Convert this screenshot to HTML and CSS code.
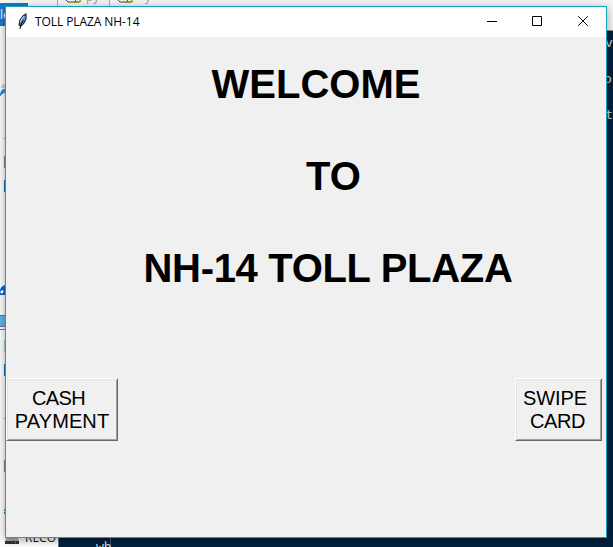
FILE: index.html
```html
<!DOCTYPE html>
<html lang="en">
<head>
<meta charset="utf-8">
<title>TOLL PLAZA NH-14</title>
<link rel="stylesheet" href="styles.css">
</head>
<body>
<main class="desktop">
  <svg class="backdrop" width="613" height="547" viewBox="0 0 613 547" aria-hidden="true">
    <rect width="613" height="547" fill="#f5f5f5"/>
    <rect y="27" width="58" height="520" fill="#fff"/>
    <rect y="3" width="28" height="23" fill="#1979ca"/>
    <text class="ui" x="0" y="19" fill="#fff">le</text>
    <rect x="57" width="1" height="7" fill="#aaa"/>
    <rect x="109" width="1" height="7" fill="#aaa"/>
    <path d="M66 0l2 2h6l2-2M118 0l2 2h6l2-2" fill="none" stroke="#444"/>
    <path d="M73 1h5l3-1v2l-3 1h-5zM125 1h5l3-1v2l-3 1h-5z" fill="#9a9a20"/>
    <text class="ui" x="86" y="1" fill="#999">py</text>
    <text class="ui" x="145" y="1" fill="#999">y</text>
    <rect x="604" y="30" width="9" height="1" fill="#8b9299"/>
    <rect x="604" y="31" width="9" height="516" fill="#012140"/>
    <rect x="58" y="536" width="555" height="11" fill="#012140"/>
    <rect x="58" y="536" width="1" height="11" fill="#66788a"/>
    <rect x="110" y="536" width="1" height="11" fill="#45586b"/>
    <g class="code">
      <text x="605" y="47">v</text>
      <text x="604" y="83">o</text>
      <text x="605" y="119">t</text>
      <text x="96" y="551">wh</text>
    </g>
    <path d="M0 94l2-4 3-1v3l-3 2-2 2zM2 85h3M1 87h4" fill="#2b8ed2" stroke="#2b8ed2" stroke-width=".6"/>
    <path d="M4 138.500h1M4 418.500h1" stroke="#4898d0"/>
    <path d="M4 156h1v12h-1zM4 460h1v12h-1z" fill="#858585"/>
    <path d="M4 180h1v12h-1zM4 364h1v12h-1z" fill="#0870b8"/>
    <path d="M0 290q1-4 5-5v10h-5z" fill="#086bc5"/>
    <path d="M0 292l2-2 2 1-2 3z" fill="#fff"/>
    <path d="M0 315h5v11H0z" fill="#65b5e8"/>
    <path d="M0 315.500h5M0 326.500h5M0 329.500h5" stroke="#667b98"/>
    <path d="M4 340h1v12h-1z" fill="#a3d5d0"/>
    <path d="M4 509h1v2h-1zM4 512h1v2h-1z" fill="#18a8e0"/>
    <path d="M6 538h12l1 3H5z" fill="#aaa"/>
    <rect x="5" y="541" width="14" height="3" fill="#333"/>
    <rect x="15" y="542" width="1" height="1" fill="#42ef4b"/>
    <text class="ui" x="25" y="542" fill="#111">RECO</text>
  </svg>
  <section class="window">
    <header class="titlebar">
      <svg class="feather" width="12" height="17" viewBox="0 0 12 17" aria-hidden="true">
        <path d="M9 1L6 3 3 7 2 12l2 1 3-3 2-4z" fill="#5e9ce6" stroke="#1b1f26" stroke-width="1.100"/>
        <path d="M7 3L4.500 6 3.500 9" fill="none" stroke="#c3cedb"/>
        <path d="M6.500 7L4 11 3 16" fill="none" stroke="#111" stroke-width="1.100"/>
      </svg>
      <h1 class="title">TOLL PLAZA NH-14</h1>
      <div class="controls">
        <svg width="45" height="30" viewBox="0 0 45 30" role="img" aria-label="Minimize"><path d="M17 14.500h10"/></svg>
        <svg width="46" height="30" viewBox="0 0 46 30" role="img" aria-label="Maximize"><path d="M17.500 9.500h9v9h-9z"/></svg>
        <svg width="45" height="30" viewBox="0 0 45 30" role="img" aria-label="Close"><path d="M17.200 9.200l9.600 9.600M26.800 9.200l-9.600 9.600"/></svg>
      </div>
    </header>
    <div class="client">
      <div class="heading">
        <p class="welcome">WELCOME</p>
        <p class="to">TO</p>
        <p class="plaza">NH-14 TOLL PLAZA</p>
      </div>
      <div class="actions">
        <button class="btn cash"><span>CASH</span><br>PAYMENT</button>
        <button class="btn card">SWIPE <br> <span>CARD</span></button>
      </div>
    </div>
  </section>
</main>
</body>
</html>
```
FILE: styles.css
```css
* { box-sizing: border-box; }
body { margin: 0; overflow: hidden; font-family: "Liberation Sans", sans-serif; color: #000; }
.desktop { position: relative; width: 613px; height: 547px; overflow: hidden; }
.backdrop { display: block; }
.ui { font: 12px "Open Sans", sans-serif; }
.code { font: 13px "DejaVu Sans Mono", monospace; fill: #dedede; }
.window {
  position: absolute; left: 5px; top: 6px; width: 602px; height: 532px;
  display: flex; flex-direction: column;
  border: 1px solid #18a2bc; background: #f0f0f0;
  box-shadow: 0 2px 9px rgba(0, 0, 0, .36);
}
.titlebar { display: flex; align-items: center; height: 30px; flex: none; background: #fff; }
.feather { margin-left: 11px; margin-bottom: 1px; }
.title { margin: 0 0 0 6px; font: 12px/30px "Open Sans", sans-serif; letter-spacing: -.08px; white-space: nowrap; }
.controls { display: flex; margin-left: auto; }
.controls path { fill: none; stroke: #000; stroke-width: 1; }
.client { flex: 1; }
.heading { height: 341px; padding-top: 24px; text-align: center; }
.heading p { margin: 0 0 46px; font-size: 40px; font-weight: bold; line-height: 46px; white-space: nowrap; }
.heading .welcome { padding-left: 20px; }
.heading .to { padding-left: 55px; }
.heading .plaza { padding-left: 44px; letter-spacing: -.32px; }
.actions { display: flex; justify-content: space-between; padding-right: 4px; }
.btn {
  height: 63px; padding: 0; background: #f0f0f0; color: #000;
  border: 1px solid; border-color: #fff #696969 #696969 #fff; border-radius: 0;
  box-shadow: inset 1px 1px #e3e3e3, inset -1px -1px #a0a0a0;
  font: 20px/23px "Liberation Sans", sans-serif; text-align: center;
}
.cash { width: 112px; letter-spacing: .1px; }
.cash span { padding-right: 7px; letter-spacing: -.6px; }
.card { width: 87px; padding-right: 7px; letter-spacing: -.1px; }
.card span { padding-left: 5px; letter-spacing: -.4px; }
```
